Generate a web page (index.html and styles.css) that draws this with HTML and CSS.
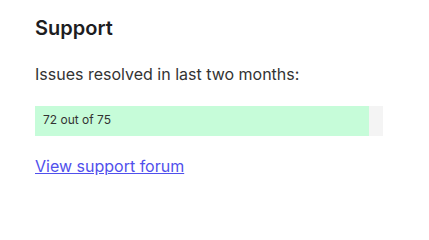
FILE: index.html
```html
<!DOCTYPE html>
<html lang="en">
<head>
<meta charset="utf-8">
<title>Support</title>
<link rel="stylesheet" href="styles.css">
</head>
<body>
<section class="support">
  <h2 class="title">Support</h2>
  <p class="lead">Issues resolved in last two months:</p>
  <div class="meter">
    <div class="meter-fill" style="width: 96%;">72 out of 75</div>
  </div>
  <a class="link" href="#">View support forum</a>
</section>
</body>
</html>
```
FILE: styles.css
```css
html, body {
  margin: 0;
  padding: 0;
  background: #ffffff;
}
body {
  font-family: Inter, "Noto Sans", sans-serif;
  color: #2b2b2b;
}
.support {
  display: flex;
  flex-direction: column;
  align-items: flex-start;
  padding: 16px 35px 0 35px;
  width: 348px;
}
.title {
  margin: 0;
  font-size: 20px;
  line-height: 24px;
  font-weight: 600;
  color: #1d1d1f;
}
.lead {
  margin: 22px 0 0 0;
  font-size: 16px;
  line-height: 24px;
  color: #333333;
}
.meter {
  margin-top: 20px;
  width: 348px;
  height: 30px;
  background: #f4f4f4;
  display: flex;
}
.meter-fill {
  background: #c6fcd9;
  height: 30px;
  box-sizing: border-box;
  padding-left: 8px;
  font-size: 12px;
  line-height: 28px;
  color: #333333;
  white-space: nowrap;
}
.link {
  margin-top: 18px;
  font-size: 16px;
  line-height: 24px;
  color: #5050ec;
  text-decoration: underline;
}
```
